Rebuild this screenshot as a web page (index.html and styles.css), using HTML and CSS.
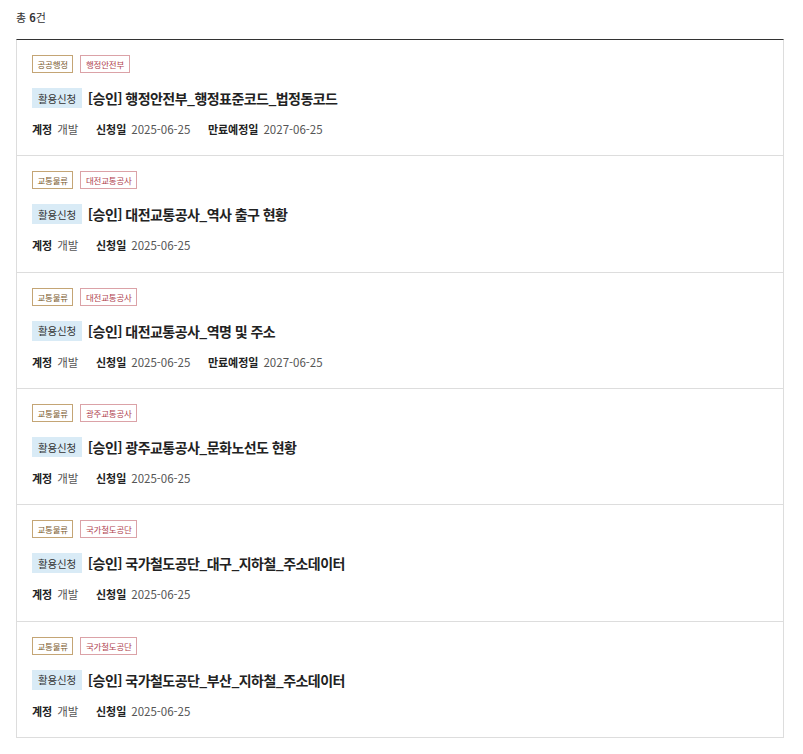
FILE: index.html
```html
<!DOCTYPE html>
<html lang="ko">
<head>
    <meta charset="UTF-8">
    <meta name="viewport" content="width=device-width, initial-scale=1.0">
    <title>활용신청 목록</title>
    <link rel="stylesheet" href="styles.css">
</head>
<body>
    <p class="total">총 <strong>6</strong>건</p>

    <!-- 활용신청 목록 -->
    <ul class="apply-list">
        <li class="apply-item">
            <div class="tags">
                <span class="tag tag-cat">공공행정</span>
                <span class="tag tag-org">행정안전부</span>
            </div>
            <h3 class="apply-title"><span class="badge">활용신청</span>[승인] 행정안전부_행정표준코드_법정동코드</h3>
            <dl class="meta">
                <dt>계정</dt><dd>개발</dd>
                <dt>신청일</dt><dd>2025-06-25</dd>
                <dt>만료예정일</dt><dd>2027-06-25</dd>
            </dl>
        </li>
        <li class="apply-item">
            <div class="tags">
                <span class="tag tag-cat">교통물류</span>
                <span class="tag tag-org">대전교통공사</span>
            </div>
            <h3 class="apply-title"><span class="badge">활용신청</span>[승인] 대전교통공사_역사 출구 현황</h3>
            <dl class="meta">
                <dt>계정</dt><dd>개발</dd>
                <dt>신청일</dt><dd>2025-06-25</dd>
            </dl>
        </li>
        <li class="apply-item">
            <div class="tags">
                <span class="tag tag-cat">교통물류</span>
                <span class="tag tag-org">대전교통공사</span>
            </div>
            <h3 class="apply-title"><span class="badge">활용신청</span>[승인] 대전교통공사_역명 및 주소</h3>
            <dl class="meta">
                <dt>계정</dt><dd>개발</dd>
                <dt>신청일</dt><dd>2025-06-25</dd>
                <dt>만료예정일</dt><dd>2027-06-25</dd>
            </dl>
        </li>
        <li class="apply-item">
            <div class="tags">
                <span class="tag tag-cat">교통물류</span>
                <span class="tag tag-org">광주교통공사</span>
            </div>
            <h3 class="apply-title"><span class="badge">활용신청</span>[승인] 광주교통공사_문화노선도 현황</h3>
            <dl class="meta">
                <dt>계정</dt><dd>개발</dd>
                <dt>신청일</dt><dd>2025-06-25</dd>
            </dl>
        </li>
        <li class="apply-item">
            <div class="tags">
                <span class="tag tag-cat">교통물류</span>
                <span class="tag tag-org">국가철도공단</span>
            </div>
            <h3 class="apply-title"><span class="badge">활용신청</span>[승인] 국가철도공단_대구_지하철_주소데이터</h3>
            <dl class="meta">
                <dt>계정</dt><dd>개발</dd>
                <dt>신청일</dt><dd>2025-06-25</dd>
            </dl>
        </li>
        <li class="apply-item">
            <div class="tags">
                <span class="tag tag-cat">교통물류</span>
                <span class="tag tag-org">국가철도공단</span>
            </div>
            <h3 class="apply-title"><span class="badge">활용신청</span>[승인] 국가철도공단_부산_지하철_주소데이터</h3>
            <dl class="meta">
                <dt>계정</dt><dd>개발</dd>
                <dt>신청일</dt><dd>2025-06-25</dd>
            </dl>
        </li>
    </ul>
</body>
</html>
```

FILE: styles.css
```css
* {
    margin: 0;
    padding: 0;
    box-sizing: border-box;
}

body {
    font-family: "Noto Sans CJK KR", "Noto Sans", sans-serif;
    color: #333;
    background: #fff;
    padding: 9px 19px 0 16px;
}

.total {
    font-size: 11px;
    line-height: 16px;
    color: #333;
    margin-bottom: 14px;
}

.total strong {
    font-weight: 700;
}

.apply-list {
    list-style: none;
    border: 1px solid #ddd;
    border-top: 1px solid #333;
}

.apply-item {
    padding: 15px 15px 18.35px;
    border-top: 1px solid #ddd;
}

.apply-item:first-child {
    border-top: none;
}

/* 분류 태그 */
.tags {
    display: flex;
    gap: 7px;
    height: 18px;
}

.tag {
    display: inline-flex;
    align-items: center;
    height: 18px;
    padding: 0 4.5px;
    font-size: 8.5px;
    letter-spacing: -0.2px;
    border: 1px solid;
}

.tag-cat {
    color: #7a5a2e;
    border-color: #c4a575;
}

.tag-org {
    color: #b0434f;
    border-color: #dba2a7;
}

.apply-title {
    display: flex;
    align-items: center;
    gap: 6px;
    margin-top: 15px;
    height: 20px;
    font-size: 14px;
    font-weight: 700;
    letter-spacing: -0.55px;
    color: #222;
}

.badge {
    display: inline-flex;
    align-items: center;
    height: 20px;
    padding: 0 6px;
    font-size: 10.5px;
    font-weight: 400;
    letter-spacing: -0.2px;
    color: #333;
    background: #d9ebf6;
}

/* 계정 / 신청일 */
.meta {
    display: flex;
    align-items: center;
    margin-top: 13px;
    height: 16px;
    font-size: 11px;
}

.meta dt {
    font-weight: 700;
    color: #222;
    margin-right: 5px;
}

.meta dd {
    color: #555;
    font-size: 11.5px;
    margin-right: 17.5px;
}
```
